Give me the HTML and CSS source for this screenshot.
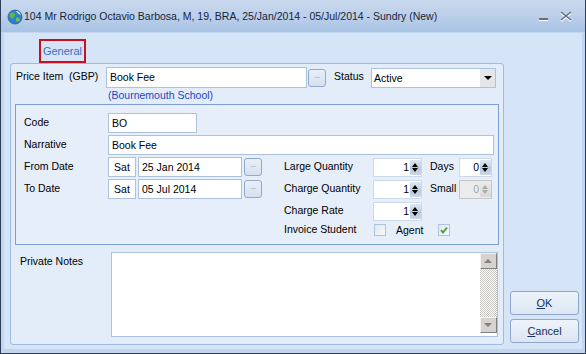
FILE: index.html
```html
<!DOCTYPE html>
<html lang="en">
<head>
    <meta charset="UTF-8">
    <title>Sundry (New)</title>
    <link rel="stylesheet" href="styles.css">
</head>
<body>
    <div class="window">
        <div class="titlebar">
            <svg class="app-icon" width="16" height="16" viewBox="0 0 16 16">
                <circle cx="8" cy="8" r="7" fill="#2f7fcf"/>
                <path d="M3 5 C4 3 7 3 8 5 C9 7 6 8 5 10 C4 9 2 8 3 5 Z" fill="#5fb84a"/>
                <path d="M9 9 C11 8 13 9 13 11 C12 13 10 13 9 12 Z" fill="#6cc150"/>
                <path d="M9 2 C11 2 13 3 14 6 C12 5 10 4 9 2 Z" fill="#e8f2fb"/>
                <circle cx="8" cy="8" r="7" fill="none" stroke="#2a5c95" stroke-width="0.8"/>
            </svg>
            <span class="title">104 Mr Rodrigo Octavio Barbosa, M, 19, BRA, 25/Jan/2014 - 05/Jul/2014 - Sundry (New)</span>
            <span class="win-min"></span>
            <svg class="win-close" width="12" height="11" viewBox="0 0 12 11">
                <path d="M1 2 L11 10 M11 2 L1 10" stroke="#ffffff" stroke-width="2"/>
                <path d="M1 1 L11 9 M11 1 L1 9" stroke="#646f80" stroke-width="1.6"/>
            </svg>
        </div>

        <div class="client">
            <div class="main">
                <div class="tabs">
                    <span class="tab">General</span>
                </div>
                <div class="sheet">
                    <div class="row price-row">
                        <label class="lbl price-lbl">Price Item&nbsp; (GBP)</label>
                        <div class="edit price-edit">Book Fee</div>
                        <span class="dots">...</span>
                        <label class="lbl status-lbl">Status</label>
                        <div class="combo">
                            <span class="combo-text">Active</span>
                            <span class="combo-arrow"></span>
                        </div>
                    </div>
                    <div class="school">(Bournemouth School)</div>

                    <div class="group">
                        <div class="row">
                            <label class="lbl field-lbl">Code</label>
                            <div class="edit code-edit">BO</div>
                        </div>
                        <div class="row">
                            <label class="lbl field-lbl">Narrative</label>
                            <div class="edit narrative-edit">Book Fee</div>
                        </div>
                        <div class="split">
                            <div class="dates">
                                <div class="row">
                                    <label class="lbl field-lbl">From Date</label>
                                    <div class="edit day-edit">Sat</div>
                                    <div class="edit date-edit">25 Jan 2014</div>
                                    <span class="dots">...</span>
                                </div>
                                <div class="row">
                                    <label class="lbl field-lbl">To Date</label>
                                    <div class="edit day-edit">Sat</div>
                                    <div class="edit date-edit">05 Jul 2014</div>
                                    <span class="dots">...</span>
                                </div>
                            </div>
                            <div class="qty">
                                <div class="row">
                                    <label class="lbl qty-lbl">Large Quantity</label>
                                    <div class="spin wide"><span class="spin-val">1</span><span class="spin-btn"></span></div>
                                    <label class="lbl side-lbl">Days</label>
                                    <div class="spin narrow"><span class="spin-val">0</span><span class="spin-btn"></span></div>
                                </div>
                                <div class="row">
                                    <label class="lbl qty-lbl">Charge Quantity</label>
                                    <div class="spin wide"><span class="spin-val">1</span><span class="spin-btn"></span></div>
                                    <label class="lbl side-lbl">Small</label>
                                    <div class="spin narrow disabled"><span class="spin-val">0</span><span class="spin-btn"></span></div>
                                </div>
                                <div class="row">
                                    <label class="lbl qty-lbl">Charge Rate</label>
                                    <div class="spin wide"><span class="spin-val">1</span><span class="spin-btn"></span></div>
                                </div>
                                <div class="row check-row">
                                    <label class="lbl qty-lbl">Invoice Student</label>
                                    <span class="check"></span>
                                    <label class="lbl agent-lbl">Agent</label>
                                    <span class="check checked">
                                        <svg width="8" height="8" viewBox="0 0 8 8"><path d="M1 4 L3 6.5 L7 1.5" fill="none" stroke="#3aa43a" stroke-width="1.8"/></svg>
                                    </span>
                                </div>
                            </div>
                        </div>
                    </div>

                    <div class="notes-row">
                        <label class="lbl notes-lbl">Private Notes</label>
                        <div class="memo">
                            <div class="vscroll">
                                <span class="sb-btn"><span class="tri-up"></span></span>
                                <span class="sb-track"></span>
                                <span class="sb-btn"><span class="tri-down"></span></span>
                            </div>
                        </div>
                    </div>
                </div>
            </div>

            <div class="buttons">
                <button class="btn"><u>O</u>K</button>
                <button class="btn"><u>C</u>ancel</button>
            </div>
        </div>
    </div>
</body>
</html>
```

FILE: styles.css
```css
* {
    margin: 0;
    padding: 0;
    box-sizing: border-box;
    font-family: 'Liberation Sans', Arial, sans-serif;
}

body {
    background-color: #ffffff;
    font-size: 10.5px;
    color: #000;
}

.window {
    width: 586px;
    height: 354px;
    background-color: #c3d6ef;
    border: 1px solid #2d3e56;
    border-top: 0;
}

/* Title bar */
.titlebar {
    height: 32px;
    display: flex;
    align-items: center;
    padding-left: 6px;
    background: linear-gradient(#c9d9ee, #bccfe9 50%, #a9c3e5);
}

.app-icon {
    flex: none;
    margin-top: 1px;
}

.title {
    margin-left: 1px;
    font-size: 10.5px;
    color: #17253d;
    white-space: nowrap;
    flex: 1;
}

.win-min {
    width: 9px;
    height: 3px;
    background-color: #646f80;
    border-bottom: 1px solid #ffffff;
    margin-top: 7px;
    margin-right: 12px;
}

.win-close {
    margin-right: 13px;
}

/* Client area */
.client {
    display: flex;
    height: 316px;
    margin: 1px 3px 0 3px;
    padding-left: 6px;
    background-color: #d5e4f7;
}

.main {
    width: 494px;
    display: flex;
    flex-direction: column;
}

.tabs {
    height: 30px;
    padding: 6px 0 0 29px;
}

.tab {
    display: block;
    width: 47px;
    height: 24px;
    border: 2px solid #c8101e;
    color: #3b6ec4;
    text-align: center;
    line-height: 20px;
    font-size: 11px;
}

.sheet {
    height: 282px;
    border: 1px solid #9fbbe2;
    border-radius: 3px;
    background-color: #e3edf9;
}

.row {
    display: flex;
    align-items: center;
    height: 20px;
}

.lbl {
    flex: none;
    white-space: nowrap;
}

.edit {
    flex: none;
    height: 20px;
    background-color: #ffffff;
    border: 1px solid #adc2df;
    padding: 0 3px;
    line-height: 18px;
    white-space: nowrap;
}

.dots {
    flex: none;
    width: 18px;
    height: 18px;
    border: 1px solid #93a9ca;
    border-radius: 3px;
    background: linear-gradient(#e9eff8, #d5e1f0);
    color: #7d8ea8;
    font-size: 8px;
    line-height: 12px;
    text-align: center;
    letter-spacing: -0.5px;
}

/* Price item row */
.price-row {
    height: 21px;
    margin-top: 3px;
    padding-left: 5px;
}

.price-lbl {
    width: 90px;
    margin-top: -4px;
}

.price-edit {
    width: 201px;
    height: 21px;
    line-height: 19px;
}

.price-row .dots {
    margin-left: 1px;
}

.status-lbl {
    width: 37px;
    margin-left: 8px;
    margin-top: -4px;
}

.combo {
    width: 125px;
    height: 20px;
    display: flex;
    background-color: #ffffff;
    border: 1px solid #adc2df;
}

.combo-text {
    flex: 1;
    padding-left: 2px;
    line-height: 18px;
}

.combo-arrow {
    width: 15px;
    background-color: #e4e6ea;
    position: relative;
}

.combo-arrow::after {
    content: "";
    position: absolute;
    left: 4px;
    top: 7px;
    border-left: 4px solid transparent;
    border-right: 4px solid transparent;
    border-top: 4px solid #000;
}

.school {
    height: 15px;
    line-height: 15px;
    padding-left: 97px;
    color: #1b46c2;
}

/* Inner group box */
.group {
    width: 484px;
    height: 141px;
    margin: 1px 0 0 4px;
    padding: 8px 0 0 8px;
    border: 1px solid #7f9fd4;
    background-color: #e6eefa;
    display: flex;
    flex-direction: column;
    gap: 2px;
}

.field-lbl {
    width: 84px;
    margin-top: -2px;
}

.code-edit {
    width: 89px;
}

.narrative-edit {
    width: 386px;
}

.split {
    display: flex;
    gap: 22px;
}

.dates,
.qty {
    display: flex;
    flex-direction: column;
    gap: 2px;
}

.day-edit {
    width: 28px;
    text-align: center;
    padding: 0;
}

.date-edit {
    width: 104px;
    margin-left: 2px;
}

.dates .dots {
    margin-left: 2px;
}

.qty-lbl {
    width: 89px;
    margin-top: -2px;
}

.side-lbl {
    width: 29px;
    margin-left: 8px;
    margin-top: -2px;
}

.spin {
    flex: none;
    height: 19px;
    display: flex;
    background-color: #ffffff;
    border: 1px solid #cdd9e9;
}

.spin.wide {
    width: 49px;
}

.spin.narrow {
    width: 33px;
}

.spin-val {
    flex: 1;
    text-align: right;
    padding-right: 1px;
    line-height: 17px;
}

.spin-btn {
    width: 11px;
    margin: 1px 0;
    background: linear-gradient(#dde6f2, #c4d1e2 50%, #b7c6da 50%, #cdd8e7);
    position: relative;
}

.spin-btn::before,
.spin-btn::after {
    content: "";
    position: absolute;
    left: 2px;
    border-left: 3.5px solid transparent;
    border-right: 3.5px solid transparent;
}

.spin-btn::before {
    top: 3px;
    border-bottom: 4px solid #000;
}

.spin-btn::after {
    bottom: 3px;
    border-top: 4px solid #000;
}

.spin.disabled {
    background-color: #ececec;
    border-color: #c6c6c6;
    color: #a3a3a3;
}

.spin.disabled .spin-btn {
    background: linear-gradient(#e9e9e9, #d9d9d9);
}

.spin.disabled .spin-btn::before {
    border-bottom-color: #a9a9a9;
}

.spin.disabled .spin-btn::after {
    border-top-color: #a9a9a9;
}

.check-row {
    height: 14px;
}

.check {
    flex: none;
    width: 12px;
    height: 12px;
    margin-left: 1px;
    border: 1px solid #b2c3d8;
    background: linear-gradient(135deg, #dfe7f1, #f7f9fc);
    display: flex;
    align-items: center;
    justify-content: center;
}

.agent-lbl {
    width: 42px;
    margin-left: 10px;
}

.check.checked {
    margin-left: 0;
}

/* Private notes */
.notes-row {
    display: flex;
    align-items: flex-start;
    margin-top: 7px;
    padding-left: 9px;
}

.notes-lbl {
    width: 91px;
    margin-top: 2px;
    line-height: 14px;
}

.memo {
    width: 387px;
    height: 85px;
    background-color: #ffffff;
    border: 1px solid #adc2df;
    display: flex;
    justify-content: flex-end;
}

.vscroll {
    width: 17px;
    margin: 0 0 3px 0;
    display: flex;
    flex-direction: column;
}

.sb-btn {
    height: 16px;
    flex: none;
    background-color: #d6d3ce;
    border: 1px solid;
    border-color: #f4f3f1 #808080 #808080 #f4f3f1;
    position: relative;
}

.sb-track {
    flex: 1;
    background: repeating-conic-gradient(#c7c5c1 0 25%, #ffffff 0 50%) 0 0 / 2px 2px;
}

.tri-up,
.tri-down {
    position: absolute;
    left: 3px;
    border-left: 4px solid transparent;
    border-right: 4px solid transparent;
}

.tri-up {
    top: 5px;
    border-bottom: 4px solid #808080;
}

.tri-down {
    top: 5px;
    border-top: 4px solid #808080;
}

/* Dialog buttons */
.buttons {
    width: 69px;
    margin-left: 6px;
    padding-bottom: 6px;
    display: flex;
    flex-direction: column;
    justify-content: flex-end;
    gap: 4px;
}

.btn {
    height: 24px;
    border: 1px solid #8ea6c9;
    border-radius: 3px;
    background: linear-gradient(#eef3fa, #dbe6f4);
    color: #15305a;
    font-size: 11px;
    text-align: center;
}
```
